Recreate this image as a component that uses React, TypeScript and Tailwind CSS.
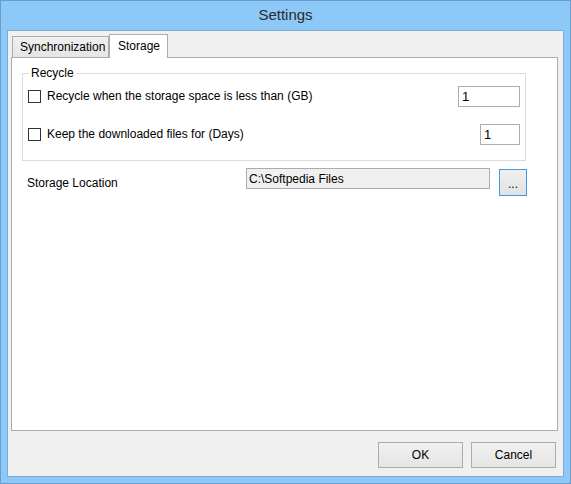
// Settings dialog — Storage tab (Windows 8 style frame).

const ui = { fontFamily: '"Liberation Sans", Arial, sans-serif' }

function Checkbox(props: { label: string }) {
  return (
    <label className="flex items-center gap-[6px] text-[12px] leading-[15px] text-black">
      <span className="w-[13px] h-[13px] border border-[#333333] bg-white flex-shrink-0" />
      <span>{props.label}</span>
    </label>
  )
}

function NumberBox(props: { value: string; width: string }) {
  return (
    <div className={`${props.width} h-[21px] border border-[#abadb3] bg-white pl-[3px] flex items-center text-[13px] text-black`}>
      {props.value}
    </div>
  )
}

function DialogButton(props: { label: string }) {
  return (
    <button className="w-[85px] h-[26px] border border-[#acacac] bg-gradient-to-b from-[#f0f0f0] to-[#e5e5e5] text-[12px] text-black">
      {props.label}
    </button>
  )
}

export default function App() {
  return (
    <div
      className="w-[571px] h-[484px] border border-[#6a9ccc] bg-[#8cc8f8] flex flex-col px-[6px] pb-[6px]"
      style={ui}
    >
      {/* title bar */}
      <div className="h-[29px] flex items-center justify-center text-[15px] text-[#2b2b2b]">Settings</div>

      {/* client area */}
      <div className="flex-1 border border-[#7fabd6] bg-[#f0f0f0] flex flex-col">
        {/* tabs */}
        <div className="flex items-end pl-[4px] pt-[3px]">
          <div className="w-[97px] h-[21px] border-l border-t border-r border-[#acacac] bg-gradient-to-b from-[#f0f0f0] to-[#e5e5e5] pl-[7px] text-[12px] leading-[20px] text-black">
            Synchronization
          </div>
          <div className="relative z-10 -mb-px w-[59px] h-[24px] border-l border-t border-r border-[#acacac] bg-white pl-[8px] text-[12px] leading-[22px] text-black">
            Storage
          </div>
        </div>

        {/* tab panel */}
        <div className="flex-1 ml-[3px] mr-[5px] border border-[#acacac] bg-white flex flex-col">
          {/* Recycle group */}
          <div className="relative mt-[15px] ml-[10px] w-[504px] border border-[#dcdcdc] pt-[12px] pb-[15px] px-[5px] flex flex-col gap-[17px]">
            <span className="absolute -top-[8px] left-[6px] bg-white px-[2px] text-[12px] leading-[15px] text-black">Recycle</span>
            <div className="flex items-center justify-between">
              <Checkbox label="Recycle when the storage space is less than (GB)" />
              <NumberBox value="1" width="w-[62px]" />
            </div>
            <div className="flex items-center justify-between">
              <Checkbox label="Keep the downloaded files for (Days)" />
              <NumberBox value="1" width="w-[40px]" />
            </div>
          </div>

          {/* storage location */}
          <div className="flex items-start mt-[7px] ml-[15px]">
            <span className="w-[219px] mt-[8px] text-[12px] leading-[15px] text-black">Storage Location</span>
            <div className="w-[244px] h-[21px] border border-[#acacac] bg-[#f0f0f0] pl-[2px] flex items-center text-[12px] text-black">
              C:\Softpedia Files
            </div>
            <button className="ml-[9px] mt-[1px] w-[28px] h-[27px] border border-[#3c9ae8] bg-gradient-to-b from-[#f0f0f0] to-[#e2e2e2] text-[12px] text-black pt-[3px]">
              ...
            </button>
          </div>
        </div>

        {/* dialog buttons */}
        <div className="h-[45px] flex justify-end items-start gap-[8px] pt-[11px] pr-[7px]">
          <DialogButton label="OK" />
          <DialogButton label="Cancel" />
        </div>
      </div>
    </div>
  )
}
